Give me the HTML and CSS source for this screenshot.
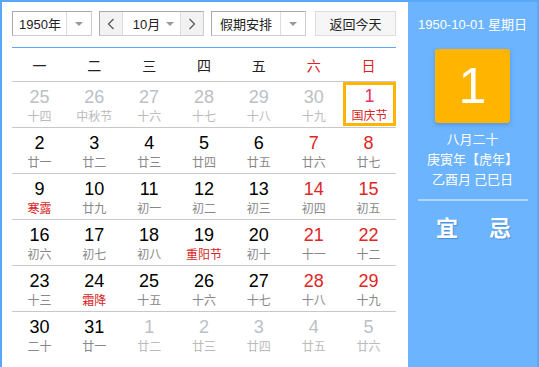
FILE: index.html
```html
<!DOCTYPE html>
<html lang="zh">
<head>
<meta charset="utf-8">
<link rel="stylesheet" href="styles.css">
</head>
<body>
<div class="cal">
  <div class="main">
    <div class="controls">
      <div class="sel year"><span class="sel-text">1950年</span><span class="sel-arrow"><i class="tri"></i></span></div>
      <div class="month-group">
        <span class="nav"><svg width="8" height="12" viewBox="0 0 8 12"><polyline points="6.5,1 1.5,6 6.5,11" fill="none" stroke="#555" stroke-width="1.2"/></svg></span>
        <span class="month">10月<i class="tri"></i></span>
        <span class="nav"><svg width="8" height="12" viewBox="0 0 8 12"><polyline points="1.5,1 6.5,6 1.5,11" fill="none" stroke="#555" stroke-width="1.2"/></svg></span>
      </div>
      <div class="sel holiday"><span class="sel-text">假期安排</span><span class="sel-arrow"><i class="tri"></i></span></div>
      <div class="today-btn">返回今天</div>
    </div>
    <div class="grid">
      <div class="head">
        <span>一</span><span>二</span><span>三</span><span>四</span><span>五</span><span class="red">六</span><span class="red">日</span>
      </div>
      <div class="week">
        <div class="day other"><b>25</b><em>十四</em></div>
        <div class="day other"><b>26</b><em>中秋节</em></div>
        <div class="day other"><b>27</b><em>十六</em></div>
        <div class="day other"><b>28</b><em>十七</em></div>
        <div class="day other"><b>29</b><em>十八</em></div>
        <div class="day other"><b>30</b><em>十九</em></div>
        <div class="day weekend fest selected"><b>1</b><em>国庆节</em></div>
      </div>
      <div class="week">
        <div class="day"><b>2</b><em>廿一</em></div>
        <div class="day"><b>3</b><em>廿二</em></div>
        <div class="day"><b>4</b><em>廿三</em></div>
        <div class="day"><b>5</b><em>廿四</em></div>
        <div class="day"><b>6</b><em>廿五</em></div>
        <div class="day weekend"><b>7</b><em>廿六</em></div>
        <div class="day weekend"><b>8</b><em>廿七</em></div>
      </div>
      <div class="week">
        <div class="day fest"><b>9</b><em>寒露</em></div>
        <div class="day"><b>10</b><em>廿九</em></div>
        <div class="day"><b>11</b><em>初一</em></div>
        <div class="day"><b>12</b><em>初二</em></div>
        <div class="day"><b>13</b><em>初三</em></div>
        <div class="day weekend"><b>14</b><em>初四</em></div>
        <div class="day weekend"><b>15</b><em>初五</em></div>
      </div>
      <div class="week">
        <div class="day"><b>16</b><em>初六</em></div>
        <div class="day"><b>17</b><em>初七</em></div>
        <div class="day"><b>18</b><em>初八</em></div>
        <div class="day fest"><b>19</b><em>重阳节</em></div>
        <div class="day"><b>20</b><em>初十</em></div>
        <div class="day weekend"><b>21</b><em>十一</em></div>
        <div class="day weekend"><b>22</b><em>十二</em></div>
      </div>
      <div class="week">
        <div class="day"><b>23</b><em>十三</em></div>
        <div class="day fest"><b>24</b><em>霜降</em></div>
        <div class="day"><b>25</b><em>十五</em></div>
        <div class="day"><b>26</b><em>十六</em></div>
        <div class="day"><b>27</b><em>十七</em></div>
        <div class="day weekend"><b>28</b><em>十八</em></div>
        <div class="day weekend"><b>29</b><em>十九</em></div>
      </div>
      <div class="week">
        <div class="day"><b>30</b><em>二十</em></div>
        <div class="day"><b>31</b><em>廿一</em></div>
        <div class="day other"><b>1</b><em>廿二</em></div>
        <div class="day other"><b>2</b><em>廿三</em></div>
        <div class="day other"><b>3</b><em>廿四</em></div>
        <div class="day other"><b>4</b><em>廿五</em></div>
        <div class="day other"><b>5</b><em>廿六</em></div>
      </div>
    </div>
  </div>
  <div class="side">
    <div class="side-date">1950-10-01 星期日</div>
    <div class="big-day">1</div>
    <div class="lunar">
      <div>八月二十</div>
      <div>庚寅年【虎年】</div>
      <div>乙酉月 己巳日</div>
    </div>
    <div class="divider"></div>
    <div class="yiji"><span>宜</span><span>忌</span></div>
  </div>
</div>
</body>
</html>
```

FILE: styles.css
```css
html, body {
  margin: 0;
  padding: 0;
  background: #fff;
}
body {
  font-family: "Liberation Sans", Arial, "Noto Sans CJK SC", sans-serif;
  color: #333;
}
.cal {
  width: 539px;
  height: 367px;
  box-sizing: border-box;
  border: 2px solid #5ba7f7;
  border-bottom: none;
  display: flex;
  overflow: hidden;
}
.main {
  width: 406px;
  box-sizing: border-box;
  padding: 9px 12px 0 10px;
}
.controls {
  display: flex;
  height: 25px;
  font-size: 13px;
}
.sel {
  display: flex;
  box-sizing: border-box;
  height: 25px;
  border: 1px solid #aaa;
  border-right-color: #ccc;
  border-bottom-color: #ccc;
  background: #fff;
}
.sel-text {
  flex: 1;
  display: flex;
  align-items: center;
  justify-content: center;
  color: #222;
}
.sel-arrow {
  width: 24px;
  border-left: 1px solid #ddd;
  display: flex;
  align-items: center;
  justify-content: center;
}
.tri {
  display: inline-block;
  width: 0;
  height: 0;
  border-left: 4px solid transparent;
  border-right: 4px solid transparent;
  border-top: 4px solid #999;
}
.year {
  width: 80px;
}
.year .sel-text {
  padding-left: 1px;
}
.month-group {
  margin-left: 7px;
  width: 105px;
  height: 25px;
  box-sizing: border-box;
  border: 1px solid #aaa;
  border-right-color: #ccc;
  border-bottom-color: #ccc;
  display: flex;
}
.nav {
  width: 22px;
  background: #f2f2f2;
  display: flex;
  align-items: center;
  justify-content: center;
}
.month {
  flex: 1;
  border-left: 1px solid #ddd;
  border-right: 1px solid #ddd;
  display: flex;
  align-items: center;
  justify-content: center;
  gap: 6px;
  color: #222;
  padding-left: 4px;
}
.holiday {
  margin-left: 7px;
  width: 95px;
}
.today-btn {
  margin-left: 9px;
  width: 81px;
  height: 25px;
  box-sizing: border-box;
  border: 1px solid #ddd;
  background: #f6f6f6;
  display: flex;
  align-items: center;
  justify-content: center;
  color: #222;
}
.grid {
  margin-top: 11px;
  border-top: 1px solid #5ba7f7;
}
.head {
  display: grid;
  grid-template-columns: repeat(7, 1fr);
  height: 33px;
  align-items: center;
  text-align: center;
  font-size: 14px;
  color: #222;
  font-family: "Noto Sans CJK SC", sans-serif;
}
.head .red {
  color: #e02020;
}
.week {
  display: grid;
  grid-template-columns: repeat(7, 1fr);
  border-top: 1px solid #c8c8c8;
  height: 45px;
}
.day {
  display: flex;
  flex-direction: column;
  align-items: center;
  padding-top: 5px;
  box-sizing: border-box;
}
.day b {
  font-weight: normal;
  font-size: 18px;
  line-height: 20px;
  color: #000;
}
.day em {
  font-style: normal;
  font-size: 12px;
  line-height: 18px;
  color: #888;
  font-family: "Noto Sans CJK SC", sans-serif;
}
.day.weekend b {
  color: #e02525;
}
.day.fest em {
  color: #d81e1e;
}
.day.other b {
  color: #bcc0c6;
}
.day.other em {
  color: #bbb;
}
.day.selected {
  height: 44px;
  margin-left: 2px;
  box-shadow: inset 0 0 0 3px #ffb400;
  padding-top: 4px;
}
.day.selected b {
  color: #e8306a;
}
.side {
  width: 129px;
  background: #6db4fe;
  display: flex;
  flex-direction: column;
  align-items: center;
  color: #fff;
  padding-top: 13px;
  box-sizing: border-box;
}
.side-date {
  font-size: 13px;
  line-height: 20px;
  white-space: nowrap;
}
.big-day {
  margin-top: 14px;
  width: 75px;
  height: 74px;
  background: #ffb400;
  border-radius: 3px;
  box-shadow: 0 2px 4px rgba(0, 60, 140, 0.25);
  font-size: 50px;
  line-height: 74px;
  text-align: center;
  font-weight: 300;
}
.lunar {
  margin-top: 6px;
  font-size: 13px;
  line-height: 20px;
  text-align: center;
  font-family: "Noto Sans CJK SC", sans-serif;
}
.divider {
  margin-top: 10px;
  width: 110px;
  height: 2px;
  background: rgba(255, 255, 255, 0.45);
}
.yiji {
  margin-top: 10px;
  display: flex;
  gap: 31px;
  font-size: 22px;
  line-height: 30px;
  font-weight: bold;
  font-family: "Noto Sans CJK SC", sans-serif;
  text-shadow: 1px 1px 1px rgba(0, 50, 120, 0.3);
  padding-left: 2px;
}
```
